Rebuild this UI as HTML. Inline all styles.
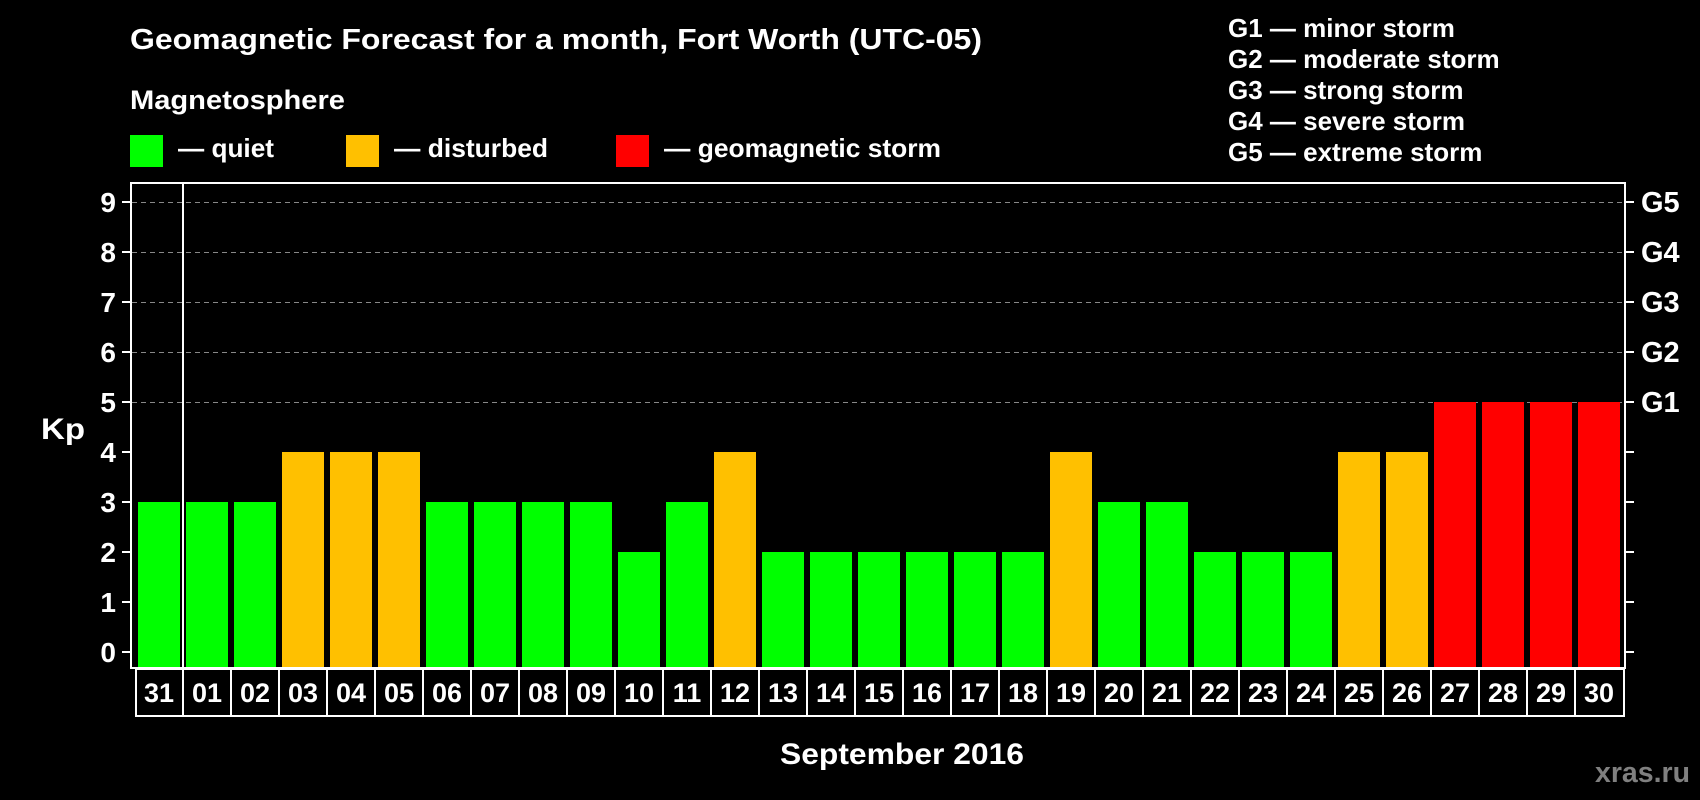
<!DOCTYPE html>
<html><head><meta charset="utf-8"><style>
html,body{margin:0;padding:0;background:#000;width:1700px;height:800px;overflow:hidden}
svg{display:block}
text{font-family:"Liberation Sans",Arial,sans-serif;font-weight:bold;fill:#fff}
</style></head><body>
<svg width="1700" height="800" viewBox="0 0 1700 800" xmlns="http://www.w3.org/2000/svg">
<rect width="1700" height="800" fill="#000"/>
<text x="130" y="49" font-size="29" textLength="852" lengthAdjust="spacingAndGlyphs">Geomagnetic Forecast for a month, Fort Worth (UTC-05)</text>
<text x="130" y="109" font-size="27" textLength="215" lengthAdjust="spacingAndGlyphs">Magnetosphere</text>
<rect x="130" y="135" width="33" height="32" fill="#00ff00"/>
<text x="178" y="157" font-size="26" textLength="96" lengthAdjust="spacingAndGlyphs">— quiet</text>
<rect x="346" y="135" width="33" height="32" fill="#ffc000"/>
<text x="394" y="157" font-size="26" textLength="154" lengthAdjust="spacingAndGlyphs">— disturbed</text>
<rect x="616" y="135" width="33" height="32" fill="#ff0000"/>
<text x="664" y="157" font-size="26" textLength="277" lengthAdjust="spacingAndGlyphs">— geomagnetic storm</text>
<g font-size="26">
<text x="1228" y="37">G1 — minor storm</text>
<text x="1228" y="68">G2 — moderate storm</text>
<text x="1228" y="99">G3 — strong storm</text>
<text x="1228" y="130">G4 — severe storm</text>
<text x="1228" y="161">G5 — extreme storm</text>
</g>
<g stroke="#888" stroke-width="1" stroke-dasharray="5,4">
<line x1="132" y1="202.5" x2="1624" y2="202.5"/>
<line x1="132" y1="252.5" x2="1624" y2="252.5"/>
<line x1="132" y1="302.5" x2="1624" y2="302.5"/>
<line x1="132" y1="352.5" x2="1624" y2="352.5"/>
<line x1="132" y1="402.5" x2="1624" y2="402.5"/>
</g>
<g id="bars">
<rect x="138" y="502" width="42" height="165" fill="#00ff00"/>
<rect x="186" y="502" width="42" height="165" fill="#00ff00"/>
<rect x="234" y="502" width="42" height="165" fill="#00ff00"/>
<rect x="282" y="452" width="42" height="215" fill="#ffc000"/>
<rect x="330" y="452" width="42" height="215" fill="#ffc000"/>
<rect x="378" y="452" width="42" height="215" fill="#ffc000"/>
<rect x="426" y="502" width="42" height="165" fill="#00ff00"/>
<rect x="474" y="502" width="42" height="165" fill="#00ff00"/>
<rect x="522" y="502" width="42" height="165" fill="#00ff00"/>
<rect x="570" y="502" width="42" height="165" fill="#00ff00"/>
<rect x="618" y="552" width="42" height="115" fill="#00ff00"/>
<rect x="666" y="502" width="42" height="165" fill="#00ff00"/>
<rect x="714" y="452" width="42" height="215" fill="#ffc000"/>
<rect x="762" y="552" width="42" height="115" fill="#00ff00"/>
<rect x="810" y="552" width="42" height="115" fill="#00ff00"/>
<rect x="858" y="552" width="42" height="115" fill="#00ff00"/>
<rect x="906" y="552" width="42" height="115" fill="#00ff00"/>
<rect x="954" y="552" width="42" height="115" fill="#00ff00"/>
<rect x="1002" y="552" width="42" height="115" fill="#00ff00"/>
<rect x="1050" y="452" width="42" height="215" fill="#ffc000"/>
<rect x="1098" y="502" width="42" height="165" fill="#00ff00"/>
<rect x="1146" y="502" width="42" height="165" fill="#00ff00"/>
<rect x="1194" y="552" width="42" height="115" fill="#00ff00"/>
<rect x="1242" y="552" width="42" height="115" fill="#00ff00"/>
<rect x="1290" y="552" width="42" height="115" fill="#00ff00"/>
<rect x="1338" y="452" width="42" height="215" fill="#ffc000"/>
<rect x="1386" y="452" width="42" height="215" fill="#ffc000"/>
<rect x="1434" y="402" width="42" height="265" fill="#ff0000"/>
<rect x="1482" y="402" width="42" height="265" fill="#ff0000"/>
<rect x="1530" y="402" width="42" height="265" fill="#ff0000"/>
<rect x="1578" y="402" width="42" height="265" fill="#ff0000"/>
</g>
<rect x="131" y="183" width="1494" height="485" fill="none" stroke="#fff" stroke-width="2"/>
<line x1="183" y1="183" x2="183" y2="668" stroke="#fff" stroke-width="2"/>
<g stroke="#fff" stroke-width="2">
<line x1="122" y1="202" x2="131" y2="202"/><line x1="122" y1="252" x2="131" y2="252"/><line x1="122" y1="302" x2="131" y2="302"/><line x1="122" y1="352" x2="131" y2="352"/><line x1="122" y1="402" x2="131" y2="402"/><line x1="122" y1="452" x2="131" y2="452"/><line x1="122" y1="502" x2="131" y2="502"/><line x1="122" y1="552" x2="131" y2="552"/><line x1="122" y1="602" x2="131" y2="602"/><line x1="122" y1="652" x2="131" y2="652"/>
<line x1="1625" y1="202" x2="1634" y2="202"/><line x1="1625" y1="252" x2="1634" y2="252"/><line x1="1625" y1="302" x2="1634" y2="302"/><line x1="1625" y1="352" x2="1634" y2="352"/><line x1="1625" y1="402" x2="1634" y2="402"/><line x1="1625" y1="452" x2="1634" y2="452"/><line x1="1625" y1="502" x2="1634" y2="502"/><line x1="1625" y1="552" x2="1634" y2="552"/><line x1="1625" y1="602" x2="1634" y2="602"/><line x1="1625" y1="652" x2="1634" y2="652"/>
</g>
<g font-size="28" text-anchor="end">
<text x="116" y="212">9</text><text x="116" y="262">8</text><text x="116" y="312">7</text><text x="116" y="362">6</text><text x="116" y="412">5</text><text x="116" y="462">4</text><text x="116" y="512">3</text><text x="116" y="562">2</text><text x="116" y="612">1</text><text x="116" y="662">0</text>
</g>
<text x="41" y="439" font-size="30" textLength="44" lengthAdjust="spacingAndGlyphs">Kp</text>
<g font-size="29">
<text x="1641" y="212">G5</text><text x="1641" y="262">G4</text><text x="1641" y="312">G3</text><text x="1641" y="362">G2</text><text x="1641" y="412">G1</text>
</g>
<rect x="136" y="669" width="1488" height="47" fill="none" stroke="#fff" stroke-width="2"/>
<g stroke="#fff" stroke-width="2">
<line x1="183" y1="669" x2="183" y2="716"/><line x1="231" y1="669" x2="231" y2="716"/><line x1="279" y1="669" x2="279" y2="716"/><line x1="327" y1="669" x2="327" y2="716"/><line x1="375" y1="669" x2="375" y2="716"/><line x1="423" y1="669" x2="423" y2="716"/><line x1="471" y1="669" x2="471" y2="716"/><line x1="519" y1="669" x2="519" y2="716"/><line x1="567" y1="669" x2="567" y2="716"/><line x1="615" y1="669" x2="615" y2="716"/><line x1="663" y1="669" x2="663" y2="716"/><line x1="711" y1="669" x2="711" y2="716"/><line x1="759" y1="669" x2="759" y2="716"/><line x1="807" y1="669" x2="807" y2="716"/><line x1="855" y1="669" x2="855" y2="716"/><line x1="903" y1="669" x2="903" y2="716"/><line x1="951" y1="669" x2="951" y2="716"/><line x1="999" y1="669" x2="999" y2="716"/><line x1="1047" y1="669" x2="1047" y2="716"/><line x1="1095" y1="669" x2="1095" y2="716"/><line x1="1143" y1="669" x2="1143" y2="716"/><line x1="1191" y1="669" x2="1191" y2="716"/><line x1="1239" y1="669" x2="1239" y2="716"/><line x1="1287" y1="669" x2="1287" y2="716"/><line x1="1335" y1="669" x2="1335" y2="716"/><line x1="1383" y1="669" x2="1383" y2="716"/><line x1="1431" y1="669" x2="1431" y2="716"/><line x1="1479" y1="669" x2="1479" y2="716"/><line x1="1527" y1="669" x2="1527" y2="716"/><line x1="1575" y1="669" x2="1575" y2="716"/>
</g>
<g font-size="27" text-anchor="middle">
<text x="159" y="702">31</text><text x="207" y="702">01</text><text x="255" y="702">02</text><text x="303" y="702">03</text><text x="351" y="702">04</text><text x="399" y="702">05</text><text x="447" y="702">06</text><text x="495" y="702">07</text><text x="543" y="702">08</text><text x="591" y="702">09</text><text x="639" y="702">10</text><text x="687" y="702">11</text><text x="735" y="702">12</text><text x="783" y="702">13</text><text x="831" y="702">14</text><text x="879" y="702">15</text><text x="927" y="702">16</text><text x="975" y="702">17</text><text x="1023" y="702">18</text><text x="1071" y="702">19</text><text x="1119" y="702">20</text><text x="1167" y="702">21</text><text x="1215" y="702">22</text><text x="1263" y="702">23</text><text x="1311" y="702">24</text><text x="1359" y="702">25</text><text x="1407" y="702">26</text><text x="1455" y="702">27</text><text x="1503" y="702">28</text><text x="1551" y="702">29</text><text x="1599" y="702">30</text>
</g>
<text x="780" y="764" font-size="30" textLength="244" lengthAdjust="spacingAndGlyphs">September 2016</text>
<text x="1595" y="782" font-size="29" style="fill:#808080" textLength="95" lengthAdjust="spacingAndGlyphs">xras.ru</text>
</svg>
</body></html>
